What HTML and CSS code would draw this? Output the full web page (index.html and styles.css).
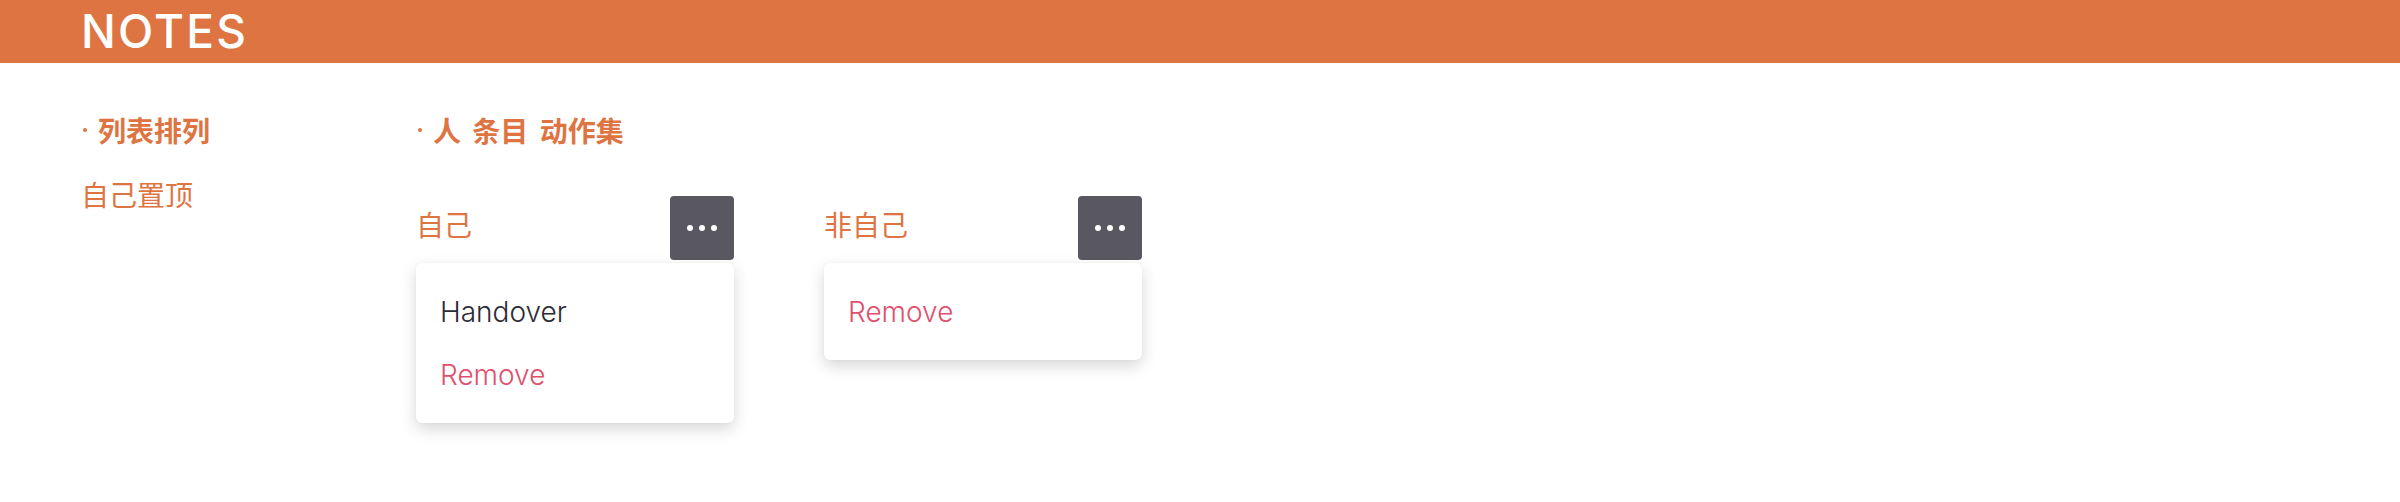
FILE: index.html
```html
<!DOCTYPE html>
<html lang="zh">
<head>
<meta charset="utf-8">
<title>Notes</title>
<link rel="stylesheet" href="styles.css">
</head>
<body>
<header class="topbar">
  <h1 class="brand">NOTES</h1>
</header>
<main class="content">
  <section class="sort">
    <h2 class="section-title">列表排列</h2>
    <div class="option">自己置顶</div>
  </section>
  <section class="actions">
    <h2 class="section-title">人 条目 动作集</h2>
    <div class="columns">
      <div class="column">
        <div class="col-head">
          <span class="col-label">自己</span>
          <button class="more" type="button" aria-label="more"><span></span><span></span><span></span></button>
        </div>
        <ul class="menu">
          <li class="menu-item">Handover</li>
          <li class="menu-item danger">Remove</li>
        </ul>
      </div>
      <div class="column">
        <div class="col-head">
          <span class="col-label">非自己</span>
          <button class="more" type="button" aria-label="more"><span></span><span></span><span></span></button>
        </div>
        <ul class="menu">
          <li class="menu-item danger">Remove</li>
        </ul>
      </div>
    </div>
  </section>
</main>
</body>
</html>
```
FILE: styles.css
```css
* { box-sizing: border-box; }
html, body { margin: 0; padding: 0; background: #ffffff; }
body {
  font-family: Inter, "Noto Sans CJK SC", sans-serif;
  color: #2c2c35;
  min-height: 502px;
}
.topbar {
  height: 63px;
  background: #de7442;
  padding-left: 81px;
  display: flex;
  align-items: center;
}
.brand {
  margin: 0;
  font-family: Inter, "Noto Sans", sans-serif;
  font-weight: 500;
  font-size: 46px;
  line-height: 1;
  color: #ffffff;
  letter-spacing: 2.2px;
  padding-bottom: 2px;
}
.content {
  display: flex;
  padding: 47px 0 60px 81px;
}
.sort { width: 335px; }
.section-title {
  margin: 0;
  font-family: "Noto Sans CJK SC", sans-serif;
  font-size: 28px;
  font-weight: 700;
  line-height: 40px;
  color: #df7443;
  word-spacing: 5px;
  display: flex;
  align-items: center;
}
.section-title::before {
  content: "";
  width: 4px;
  height: 4px;
  border-radius: 50%;
  background: #df7443;
  margin: 0 11px 0 2px;
}
.option {
  margin-top: 24px;
  font-family: "Noto Sans CJK SC", sans-serif;
  font-size: 28px;
  line-height: 40px;
  color: #df7443;
}
.columns {
  display: flex;
  gap: 90px;
  margin-top: 46px;
}
.column { width: 318px; }
.col-head {
  display: flex;
  justify-content: space-between;
  align-items: flex-start;
}
.col-label {
  margin-top: 8px;
  font-family: "Noto Sans CJK SC", sans-serif;
  font-size: 28px;
  line-height: 40px;
  color: #df7443;
}
.more {
  width: 64px;
  height: 64px;
  border: 0;
  border-radius: 4px;
  background: #595860;
  display: flex;
  align-items: center;
  justify-content: center;
  gap: 6px;
  padding: 0;
}
.more span {
  width: 6px;
  height: 6px;
  border-radius: 50%;
  background: #ffffff;
}
.menu {
  list-style: none;
  margin: 3px 0 0;
  padding: 17px 0;
  background: #ffffff;
  border-radius: 6px;
  box-shadow: 0 6px 16px rgba(0, 0, 0, 0.16), 0 0 2px rgba(0, 0, 0, 0.06);
}
.menu-item {
  height: 63px;
  display: flex;
  align-items: center;
  padding-left: 24px;
  font-size: 28px;
  font-weight: 300;
  color: #2c2c35;
}
.menu-item.danger { color: #df4f6e; }
```
